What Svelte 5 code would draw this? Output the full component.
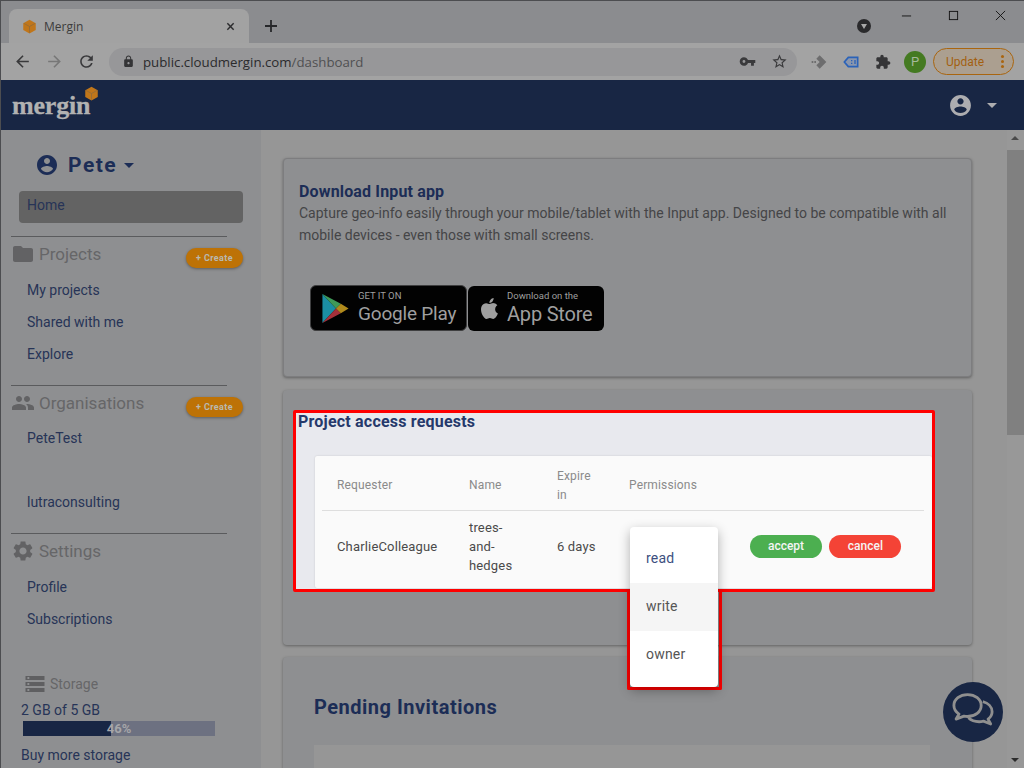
<script>
	const icons = {
		account: 'M12 2C6.48 2 2 6.48 2 12s4.48 10 10 10 10-4.48 10-10S17.52 2 12 2zm0 3c1.66 0 3 1.34 3 3s-1.34 3-3 3-3-1.34-3-3 1.34-3 3-3zm0 14.2c-2.5 0-4.71-1.28-6-3.22.03-1.99 4-3.08 6-3.08 1.99 0 5.97 1.09 6 3.08-1.29 1.94-3.5 3.22-6 3.22z',
		folder: 'M10 4H4c-1.1 0-1.99.9-1.99 2L2 18c0 1.1.9 2 2 2h16c1.1 0 2-.9 2-2V8c0-1.1-.9-2-2-2h-8l-2-2z',
		people: 'M16 11c1.66 0 2.99-1.34 2.99-3S17.66 5 16 5c-1.66 0-3 1.34-3 3s1.34 3 3 3zm-8 0c1.66 0 2.99-1.34 2.99-3S9.66 5 8 5C6.34 5 5 6.34 5 8s1.34 3 3 3zm0 2c-2.33 0-7 1.17-7 3.5V19h14v-2.5c0-2.33-4.67-3.5-7-3.5zm8 0c-.29 0-.62.02-.97.05 1.16.84 1.97 1.97 1.97 3.45V19h6v-2.5c0-2.33-4.67-3.5-7-3.5z',
		settings: 'M19.14 12.94c.04-.3.06-.61.06-.94 0-.32-.02-.64-.07-.94l2.03-1.58c.18-.14.23-.41.12-.61l-1.92-3.32c-.12-.22-.37-.29-.59-.22l-2.39.96c-.5-.38-1.03-.7-1.62-.94l-.36-2.54c-.04-.24-.24-.41-.48-.41h-3.84c-.24 0-.43.17-.47.41l-.36 2.54c-.59.24-1.13.57-1.62.94l-2.39-.96c-.22-.08-.47 0-.59.22L2.74 8.87c-.12.21-.08.47.12.61l2.03 1.58c-.05.3-.09.63-.09.94s.02.64.07.94l-2.03 1.58c-.18.14-.23.41-.12.61l1.92 3.32c.12.22.37.29.59.22l2.39-.96c.5.38 1.03.7 1.62.94l.36 2.54c.05.24.24.41.48.41h3.84c.24 0 .44-.17.47-.41l.36-2.54c.59-.24 1.13-.56 1.62-.94l2.39.96c.22.08.47 0 .59-.22l1.92-3.32c.12-.22.07-.47-.12-.61l-2.01-1.58zM12 15.6c-1.98 0-3.6-1.62-3.6-3.6s1.62-3.6 3.6-3.6 3.6 1.62 3.6 3.6-1.62 3.6-3.6 3.6z',
		storage: 'M2 20h20v-4H2v4zm2-3h2v2H4v-2zM2 4v4h20V4H2zm4 3H4V5h2v2zm-4 7h20v-4H2v4zm2-3h2v2H4v-2z',
		puzzle: 'M20.5 11H19V7c0-1.1-.9-2-2-2h-4V3.5C13 2.12 11.88 1 10.5 1S8 2.12 8 3.5V5H4c-1.1 0-1.99.9-1.99 2v3.8H3.5c1.49 0 2.7 1.21 2.7 2.7s-1.21 2.7-2.7 2.7H2V20c0 1.1.9 2 2 2h3.8v-1.5c0-1.49 1.21-2.7 2.7-2.7 1.49 0 2.7 1.21 2.7 2.7V22H17c1.1 0 2-.9 2-2v-4h1.5c1.38 0 2.5-1.12 2.5-2.5S21.88 11 20.5 11z',
		star: 'M22 9.24l-7.19-.62L12 2 9.19 8.63 2 9.24l5.46 4.73L5.82 21 12 17.27 18.18 21l-1.63-7.03L22 9.24zM12 15.4l-3.76 2.27 1-4.28-3.32-2.88 4.38-.38L12 6.1l1.71 4.04 4.38.38-3.32 2.88 1 4.28L12 15.4z',
		key: 'M12.65 10C11.83 7.67 9.61 6 7 6c-3.31 0-6 2.69-6 6s2.69 6 6 6c2.61 0 4.83-1.67 5.65-4H17v4h4v-4h2v-4H12.65zM7 14c-1.1 0-2-.9-2-2s.9-2 2-2 2 .9 2 2-.9 2-2 2z',
		lock: 'M18 8h-1V6c0-2.76-2.24-5-5-5S7 3.24 7 6v2H6c-1.1 0-2 .9-2 2v10c0 1.1.9 2 2 2h12c1.1 0 2-.9 2-2V10c0-1.1-.9-2-2-2zM12 17c-1.1 0-2-.9-2-2s.9-2 2-2 2 .9 2 2-.9 2-2 2zm3.1-9H8.9V6c0-1.71 1.39-3.1 3.1-3.1s3.1 1.39 3.1 3.1v2z',
		refresh: 'M17.65 6.35C16.2 4.9 14.21 4 12 4c-4.42 0-7.99 3.58-7.99 8s3.57 8 7.99 8c3.73 0 6.84-2.55 7.73-6h-2.08c-.82 2.33-3.04 4-5.65 4-3.31 0-6-2.69-6-6s2.69-6 6-6c1.66 0 3.14.69 4.22 1.78L13 11h7V4l-2.35 2.35z',
		back: 'M20 11H7.83l5.59-5.59L12 4l-8 8 8 8 1.41-1.41L7.83 13H20v-2z',
		forward: 'M12 4l-1.41 1.41L16.17 11H4v2h12.17l-5.58 5.59L12 20l8-8z',
		apple: 'M18.71 19.5c-.83 1.24-1.71 2.45-3.05 2.47-1.34.03-1.77-.79-3.29-.79-1.53 0-2 .77-3.27.82-1.31.05-2.3-1.32-3.14-2.53C4.25 17 2.94 12.45 4.7 9.39c.87-1.52 2.43-2.48 4.12-2.51 1.28-.02 2.5.87 3.29.87.78 0 2.26-1.07 3.81-.91.65.03 2.47.26 3.64 1.98-.09.06-2.17 1.28-2.15 3.81.03 3.02 2.65 4.03 2.68 4.04-.03.07-.42 1.44-1.38 2.83M13 3.5c.73-.83 1.94-1.46 2.94-1.5.13 1.17-.34 2.35-1.04 3.19-.69.85-1.83 1.51-2.95 1.42-.15-1.15.41-2.35 1.05-3.11z'
	}

	const projectLinks = ['My projects', 'Shared with me', 'Explore']
	const storagePercent = 46
</script>

{#snippet icon(name, cls)}
	<svg class={cls} viewBox="0 0 24 24" aria-hidden="true"><path d={icons[name]} /></svg>
{/snippet}

{#snippet cube(cls)}
	<svg class={cls} viewBox="0 0 24 24" aria-hidden="true">
		<path d="M12 1l10 5.6v11L12 23 2 17.6v-11z" fill="#c0761a" />
		<path d="M3 7l9 5 9-5M12 12v10" fill="none" stroke="#8d6a3c" stroke-width="1.2" />
	</svg>
{/snippet}

<div class="window">
	<div class="tabstrip">
		<div class="tab">
			{@render cube('favicon')}
			<span class="tab-title">Mergin</span>
			<svg class="tab-close" viewBox="0 0 10 10"><path d="M1.5 1.5l7 7M8.5 1.5l-7 7" /></svg>
		</div>
		<svg class="newtab" viewBox="0 0 12 12"><path d="M6 0v12M0 6h12" /></svg>
		<div class="media-badge"><span></span></div>
		<div class="winctl">
			<svg viewBox="0 0 12 12"><path d="M1 6.5h10" /></svg>
			<svg viewBox="0 0 12 12"><rect x="1.5" y="1.5" width="9" height="9" /></svg>
			<svg viewBox="0 0 12 12"><path d="M1 1l10 10M11 1L1 11" /></svg>
		</div>
	</div>

	<div class="toolbar">
		{@render icon('back', 'nav')}
		{@render icon('forward', 'nav off')}
		{@render icon('refresh', 'nav')}
		<div class="omnibox">
			{@render icon('lock', 'lock')}
			<span class="url">public.cloudmergin.com<span class="path">/dashboard</span></span>
			{@render icon('key', 'omni-icon key')}
			{@render icon('star', 'omni-icon')}
		</div>
		<svg class="ext ext-diamond" viewBox="0 0 24 24"><path d="M13 2l10 10-10 10-5-5 5-5-5-5zM1 10.500h2.500v3H1zM5 10.500h2.500v3H5z" /></svg>
		<svg class="ext ext-tag" viewBox="0 0 24 24"><path d="M8 5h14v14H8l-6-7z" fill="#8b97ad" stroke="#2a62b8" stroke-width="2.500" /><path d="M12 9h2v2h-2zM12 13h2v2h-2zM17 9h2v6h-2z" fill="#2a62b8" /></svg>
		{@render icon('puzzle', 'ext puzzle')}
		<div class="avatar">P</div>
		<div class="update">
			<span>Update</span>
			<i class="dots"></i>
		</div>
	</div>

	<header class="appbar">
		<div class="logo">
			<span class="wordmark">mergin</span>
			{@render cube('logo-cube')}
		</div>
		<div class="appbar-user">
			{@render icon('account', 'appbar-account')}
			<span class="caret light"></span>
		</div>
	</header>

	<div class="body">
		<aside class="sidebar">
			<div class="user">
				{@render icon('account', 'user-icon')}
				<span class="user-name">Pete</span>
				<span class="caret dark"></span>
			</div>
			<div class="home">Home</div>

			<hr />
			<div class="section">
				{@render icon('folder', 'section-icon')}
				<span>Projects</span>
				<button class="create">+ Create</button>
			</div>
			<ul class="links">
				{#each projectLinks as link}
					<li>{link}</li>
				{/each}
			</ul>

			<hr class="second" />
			<div class="section">
				{@render icon('people', 'section-icon')}
				<span>Organisations</span>
				<button class="create">+ Create</button>
			</div>
			<ul class="links orgs">
				<li>PeteTest</li>
				<li class="spaced">lutraconsulting</li>
			</ul>

			<hr class="third" />
			<div class="section">
				{@render icon('settings', 'section-icon')}
				<span>Settings</span>
			</div>
			<ul class="links">
				<li>Profile</li>
				<li>Subscriptions</li>
			</ul>

			<div class="storage">
				<div class="storage-title">
					{@render icon('storage', 'storage-icon')}
					<span>Storage</span>
				</div>
				<div class="storage-used">2 GB of 5 GB</div>
				<div class="bar">
					<div class="bar-fill" style="width: {storagePercent}%"></div>
					<span>{storagePercent}%</span>
				</div>
				<div class="buy">Buy more storage</div>
			</div>
		</aside>

		<main class="main">
			<section class="card download">
				<h3>Download Input app</h3>
				<p>Capture geo-info easily through your mobile/tablet with the Input app. Designed to be compatible with all mobile devices - even those with small screens.</p>
				<div class="badges">
					<div class="badge play">
						<svg class="play-icon" viewBox="0 0 28 32">
							<path d="M1 1l14 15L1 31z" fill="#1b8ea3" />
							<path d="M1 1l19 10-5 5z" fill="#3f9a58" />
							<path d="M1 31l19-10-5-5z" fill="#a5303a" />
							<path d="M20 11l8 5-8 5-5-5z" fill="#b08a1c" />
						</svg>
						<div class="badge-text">
							<small>GET IT ON</small>
							<strong>Google Play</strong>
						</div>
					</div>
					<div class="badge store">
						{@render icon('apple', 'apple')}
						<div class="badge-text">
							<small>Download on the</small>
							<strong>App Store</strong>
						</div>
					</div>
				</div>
			</section>

			<section class="card requests">
				<div class="spotlight">
					<h3>Project access requests</h3>
					<div class="table-wrap">
						<table>
							<thead>
								<tr>
									<th class="c1">Requester</th>
									<th class="c2">Name</th>
									<th class="c3">Expire in</th>
									<th class="c4">Permissions</th>
									<th></th>
								</tr>
							</thead>
							<tbody>
								<tr>
									<td>CharlieColleague</td>
									<td>trees-and-hedges</td>
									<td>6 days</td>
									<td></td>
									<td class="actions">
										<button class="pill accept">accept</button>
										<button class="pill cancel">cancel</button>
									</td>
								</tr>
							</tbody>
						</table>
					</div>
				</div>
				<div class="menu-ring"></div>
				<div class="menu">
					<div class="item active">read</div>
					<div class="item hover">write</div>
					<div class="item">owner</div>
				</div>
			</section>

			<section class="card pending">
				<h2>Pending Invitations</h2>
				<div class="pending-table"></div>
			</section>
		</main>

		<div class="scrollbar">
			<span class="arrow up"></span>
			<div class="thumb"></div>
			<span class="arrow down"></span>
		</div>
	</div>

	<div class="chat">
		<svg viewBox="0 0 44 44" fill="none" stroke="#8f8f8f" stroke-width="2.600" stroke-linejoin="round">
			<path d="M17 6c-7 0-12.500 4.200-12.500 10 0 3.300 1.800 6 4.700 7.900l-2.700 4.600 7.200-2.700c1 .2 2.200.3 3.300.3 7 0 12.500-4.300 12.500-10.100S24 6 17 6z" />
			<path d="M31 12.500c5 1.300 8.500 5 8.500 9.200 0 2.700-1.300 5-3.700 6.800l2.400 4.500-6.600-2.600c-1.300.3-2.600.5-4 .5-4 0-7.500-1.400-9.800-3.600" />
		</svg>
	</div>
</div>

<style>
	:global(body) {
		margin: 0;
		overflow: hidden;
	}

	.window {
		position: relative;
		display: flex;
		flex-direction: column;
		width: 1024px;
		height: 768px;
		overflow: hidden;
		box-sizing: border-box;
		border-top: 1px solid #4c4d50;
		border-left: 1px solid #4c4d50;
		font-family: Roboto, "Liberation Sans", sans-serif;
		background: #8e8f91;
	}

	/* browser chrome */
	.tabstrip {
		display: flex;
		align-items: flex-end;
		height: 42px;
		flex: none;
		background: #8b8c8f;
	}

	.tab {
		display: flex;
		align-items: center;
		width: 240px;
		height: 34px;
		margin-left: 8px;
		padding: 0 14px 0 13px;
		box-sizing: border-box;
		border-radius: 8px 8px 0 0;
		background: #a2a2a2;
	}

	.favicon {
		width: 15px;
		height: 15px;
	}

	.tab-title {
		margin-left: 7px;
		font-family: "Open Sans", sans-serif;
		font-size: 12px;
		color: #3c3c3c;
	}

	.tab-close {
		width: 9px;
		height: 9px;
		margin-left: auto;
		fill: none;
		stroke: #2c2c2e;
		stroke-width: 1.6;
	}

	.newtab {
		width: 12px;
		height: 12px;
		margin: 0 0 11px 16px;
		fill: none;
		stroke: #26272a;
		stroke-width: 1.8;
	}

	.media-badge {
		display: flex;
		align-items: center;
		justify-content: center;
		width: 14px;
		height: 14px;
		margin: 0 0 10px 580px;
		border-radius: 50%;
		background: #2a2a2c;
	}

	.media-badge span {
		border-left: 3.5px solid transparent;
		border-right: 3.5px solid transparent;
		border-top: 5px solid #a8a8a8;
		margin-top: 1px;
	}

	.winctl {
		display: flex;
		gap: 36px;
		margin: 0 0 22px auto;
		padding-right: 18px;
		align-self: flex-end;
	}

	.winctl svg {
		width: 11px;
		height: 11px;
		fill: none;
		stroke: #111;
		stroke-width: 1;
	}

	.toolbar {
		display: flex;
		align-items: center;
		height: 37px;
		flex: none;
		padding: 0 10px 0 12px;
		box-sizing: border-box;
		background: #a3a3a3;
	}

	.nav {
		width: 19px;
		height: 19px;
		margin-right: 13px;
		fill: #39393b;
	}

	.nav.off {
		fill: #777;
	}

	.omnibox {
		display: flex;
		align-items: center;
		flex: 1;
		height: 28px;
		margin: 0 14px 0 0;
		padding: 0 9px 0 13px;
		border-radius: 14px;
		background: #979799;
	}

	.lock {
		width: 13px;
		height: 13px;
		fill: #343436;
	}

	.url {
		margin-left: 8px;
		font-family: "Open Sans", sans-serif;
		font-size: 13.250px;
		color: #2b2b2d;
	}

	.path {
		color: #505052;
	}

	.omni-icon {
		width: 17px;
		height: 17px;
		margin-left: 15px;
		fill: #3a3a3c;
	}

	.omni-icon.key {
		margin-left: auto;
	}

	.ext {
		width: 16px;
		height: 16px;
		margin-right: 16px;
	}

	.ext-diamond {
		fill: #6d6d6e;
	}

	.puzzle {
		fill: #353537;
		margin-right: 13px;
	}

	.avatar {
		width: 22px;
		height: 22px;
		margin-right: 7px;
		border-radius: 50%;
		background: #447a21;
		color: #a5b89b;
		font-size: 13px;
		line-height: 22px;
		text-align: center;
	}

	.update {
		display: flex;
		align-items: center;
		justify-content: space-between;
		width: 81px;
		height: 27px;
		padding: 0 9px 0 12px;
		box-sizing: border-box;
		border: 1px solid #a9650f;
		border-radius: 14px;
		background: #ab9f90;
		color: #a35f10;
		font-size: 12px;
	}

	.dots {
		width: 3px;
		height: 3px;
		border-radius: 50%;
		background: #a9650f;
		box-shadow: 0 -5px 0 #a9650f, 0 5px 0 #a9650f;
	}

	/* app bar */
	.appbar {
		display: flex;
		align-items: center;
		justify-content: space-between;
		height: 50px;
		flex: none;
		padding: 0 25px 0 11px;
		background: #182644;
	}

	.logo {
		display: flex;
		align-items: flex-start;
		padding-top: 2px;
	}

	.wordmark {
		font-family: "Liberation Serif", serif;
		font-weight: 700;
		font-size: 26px;
		letter-spacing: -0.2px;
		color: #b2b2b2;
		line-height: 38px;
		-webkit-text-stroke: 0.3px #b2b2b2;
	}

	.logo-cube {
		width: 15px;
		height: 15px;
		margin: -1px 0 0 -6px;
	}

	.appbar-user {
		display: flex;
		align-items: center;
		gap: 14px;
		margin-right: 2px;
	}

	.appbar-account {
		width: 25px;
		height: 25px;
		fill: #adadb0;
	}

	.caret {
		width: 0;
		height: 0;
		border-left: 5px solid transparent;
		border-right: 5px solid transparent;
	}

	.caret.light {
		border-top: 5px solid #adadb0;
	}

	.caret.dark {
		border-top: 5px solid #1c2d56;
	}

	.body {
		display: flex;
		flex: 1;
		min-height: 0;
	}

	/* sidebar */
	.sidebar {
		display: flex;
		flex-direction: column;
		width: 260px;
		flex: none;
		padding: 0 18px 0 10px;
		box-sizing: border-box;
		background: #8e8f91;
		overflow: hidden;
	}

	.user {
		display: flex;
		align-items: center;
		height: 26px;
		margin: 22px 0 13px 24px;
	}

	.user-icon {
		width: 24px;
		height: 24px;
		fill: #1c2d56;
	}

	.user-name {
		margin: 0 7px 0 9px;
		font-size: 21px;
		font-weight: 700;
		letter-spacing: 1.500px;
		color: #1c2d56;
	}

	.home {
		height: 32px;
		margin: 0 0 13px 8px;
		padding-left: 8px;
		border-radius: 4px;
		background: #636363;
		font-size: 14px;
		line-height: 28px;
		color: #273457;
	}

	hr {
		width: 216px;
		height: 1px;
		margin: 0;
		flex: none;
		border: 0;
		background: #5a5b5d;
	}

	hr.second {
		margin-top: 15px;
	}

	hr.third {
		margin-top: 15px;
	}

	.section {
		display: flex;
		align-items: center;
		height: 34px;
		font-size: 17px;
		color: #666668;
	}

	.section-icon {
		width: 24px;
		height: 24px;
		margin-right: 4px;
		fill: #626264;
	}

	.create {
		width: 57px;
		height: 20px;
		margin: 8px 0 0 auto;
		padding: 0;
		border: 0;
		border-radius: 10px;
		background: #bd7206;
		box-shadow: 0 1px 3px rgb(0 0 0 / 0.35);
		color: #b9b9b0;
		font-family: Roboto, sans-serif;
		font-size: 9px;
		font-weight: 700;
		letter-spacing: 0.4px;
	}

	.links {
		margin: 0;
		padding: 3px 0 0 16px;
		list-style: none;
		font-size: 14px;
		line-height: 32px;
		color: #273457;
	}

	.links.orgs {
		padding-top: 2px;
	}

	.links .spaced {
		margin-top: 32px;
	}

	.storage {
		margin: 37px 0 0 10px;
	}

	.storage-title {
		display: flex;
		align-items: center;
		height: 24px;
		margin-left: 2px;
		font-size: 14px;
		color: #666668;
	}

	.storage-icon {
		width: 24px;
		height: 24px;
		margin-right: 3px;
		fill: #5f5f61;
		transform: scaleX(0.95);
	}

	.storage-used {
		margin-top: 5px;
		font-size: 14px;
		line-height: 19px;
		color: #273457;
	}

	.bar {
		position: relative;
		width: 192px;
		height: 15px;
		margin: 1px 0 0 2px;
		background: #6d7181;
		text-align: center;
		font-size: 13px;
		font-weight: 700;
		line-height: 15px;
		color: #a5a5a8;
	}

	.bar span {
		position: relative;
	}

	.bar-fill {
		position: absolute;
		top: 0;
		left: 0;
		bottom: 0;
		background: #182644;
	}

	.buy {
		margin-top: 10px;
		font-size: 14px;
		line-height: 19px;
		color: #273457;
	}

	/* main column */
	.main {
		flex: 1;
		min-width: 0;
		padding: 28px 35px 0 22px;
		background: #969696;
		overflow: hidden;
	}

	.card {
		position: relative;
		box-sizing: border-box;
		border-radius: 4px;
		background: #8e8f91;
		box-shadow: 0 1px 3px rgb(0 0 0 / 0.35);
	}

	.download {
		height: 219px;
		padding: 23px 15px 0;
		border: 1px solid #7d7d7f;
	}

	.download h3 {
		margin: 0 0 1px;
		font-size: 16px;
		line-height: 20px;
		font-weight: 700;
		letter-spacing: 0.15px;
		color: #1c2d56;
	}

	.download p {
		margin: 0;
		font-size: 14px;
		line-height: 21.500px;
		color: #454547;
	}

	.badges {
		display: flex;
		margin: 39px 0 0 11px;
		align-items: center;
	}

	.badge {
		display: flex;
		align-items: center;
		box-sizing: border-box;
		border-radius: 6px;
		background: #020202;
		color: #9f9f9f;
	}

	.play {
		width: 157px;
		height: 46px;
		padding-left: 10px;
		border: 1px solid #3f3f40;
	}

	.store {
		width: 136px;
		height: 45px;
		margin-left: 1px;
		padding-left: 9px;
	}

	.play-icon {
		width: 28px;
		height: 31px;
		margin-right: 9px;
	}

	.apple {
		width: 25px;
		height: 27px;
		margin-right: 5px;
		fill: #9f9f9f;
	}

	.badge-text {
		display: flex;
		flex-direction: column;
		gap: 1px;
		white-space: nowrap;
	}

	.badge-text small {
		font-size: 9.500px;
		line-height: 11px;
	}

	.badge-text strong {
		font-weight: 400;
		font-size: 19px;
		line-height: 24px;
		letter-spacing: -0.2px;
	}

	.store .badge-text strong {
		font-size: 20px;
	}

	.requests {
		z-index: 1;
		height: 255px;
		margin-top: 13px;
		padding: 20px 0 0 10px;
	}

	.spotlight {
		width: 642px;
		height: 182px;
		padding: 0 0 0 2px;
		box-sizing: border-box;
		border: 3px solid #f00;
		border-radius: 2px;
		background: #e8e9ee;
	}

	.spotlight h3 {
		margin: 0 0 25px;
		font-size: 16px;
		line-height: 18px;
		font-weight: 700;
		letter-spacing: 0.2px;
		color: #26396b;
	}

	.table-wrap {
		width: 617px;
		height: 132px;
		margin-left: 17px;
		padding: 5px 7px 0;
		box-sizing: border-box;
		border-radius: 2px;
		background: #fafafa;
		box-shadow: 0 0 2px rgb(0 0 0 / 0.15);
	}

	table {
		width: 602px;
		table-layout: fixed;
		border-collapse: collapse;
		color: #4a4a4a;
	}

	th {
		height: 49px;
		padding: 0 15px;
		font-size: 12px;
		line-height: 19px;
		font-weight: 400;
		letter-spacing: 0.15px;
		text-align: left;
		color: #8a8a8a;
		border-bottom: 1px solid #dedede;
	}

	th.c1 {
		width: 102px;
	}

	th.c2 {
		width: 58px;
	}

	th.c3 {
		width: 42px;
	}

	th.c4 {
		width: 70px;
	}

	td {
		height: 70px;
		padding: 0 15px;
		font-size: 13px;
		line-height: 19px;
		letter-spacing: 0.16px;
	}

	.actions {
		padding: 0 0 0 36px;
		white-space: nowrap;
	}

	.pill {
		width: 72px;
		height: 23px;
		padding: 0;
		border: 0;
		border-radius: 12px;
		color: #f4f4f4;
		font-family: Roboto, sans-serif;
		font-size: 12px;
		font-weight: 500;
	}

	.pill + .pill {
		margin-left: 4px;
	}

	.accept {
		background: #4caf50;
	}

	.cancel {
		background: #f44336;
	}

	.menu-ring {
		position: absolute;
		top: 200px;
		left: 344px;
		width: 95px;
		height: 100px;
		box-sizing: border-box;
		border: 3px solid #f00;
		border-top: 0;
		border-radius: 0 0 2px 2px;
	}

	.menu {
		position: absolute;
		top: 137px;
		left: 347px;
		width: 88px;
		padding: 8px 0;
		border-radius: 4px;
		background: #fff;
		box-shadow: 0 4px 12px rgb(0 0 0 / 0.3);
	}

	.item {
		height: 48px;
		padding-left: 16px;
		font-size: 14px;
		line-height: 46px;
		color: #555;
		letter-spacing: 0.2px;
	}

	.item.active {
		color: #3d4f80;
	}

	.item.hover {
		background: #f5f5f5;
	}

	.pending {
		height: 300px;
		margin-top: 12px;
		padding: 35px 31px 0;
	}

	.pending h2 {
		margin: 0 0 23px;
		font-size: 20px;
		line-height: 30px;
		font-weight: 700;
		letter-spacing: 0.5px;
		color: #1c2d56;
	}

	.pending-table {
		width: 616px;
		height: 120px;
		background: #969696;
	}

	/* page scrollbar */
	.scrollbar {
		position: relative;
		width: 17px;
		flex: none;
		background: #989898;
	}

	.thumb {
		width: 100%;
		height: 285px;
		margin-top: 20px;
		background: #808080;
	}

	.arrow {
		position: absolute;
		left: 4px;
		border-left: 4px solid transparent;
		border-right: 4px solid transparent;
	}

	.arrow.up {
		top: 6px;
		border-bottom: 4px solid #4a4a4a;
	}

	.arrow.down {
		bottom: 6px;
		border-top: 4px solid #2c2c2c;
	}

	.chat {
		position: absolute;
		top: 681px;
		left: 942px;
		z-index: 2;
		display: flex;
		align-items: center;
		justify-content: center;
		width: 60px;
		height: 60px;
		border-radius: 50%;
		background: #182644;
	}

	.chat svg {
		width: 48px;
		height: 48px;
	}
</style>
